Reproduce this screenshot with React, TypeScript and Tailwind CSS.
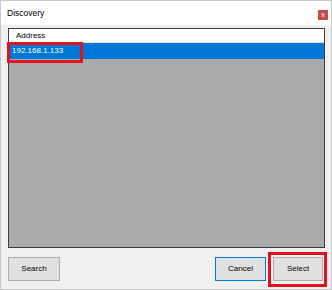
export default function App() {
  return (
    <div
      className="relative flex h-[290px] w-[332px] flex-col border border-[#c9c9c9] bg-[#f0f0f0] text-[8px] text-black"
      style={{ fontFamily: '"Liberation Sans", Arial, sans-serif' }}
    >
      <div className="flex h-[24px] items-center justify-between bg-white pl-[6px] pr-[3px]">
        <span className="text-[8.5px]">Discovery</span>
        <div className="mt-[3px] flex h-[10px] w-[10px] items-center justify-center bg-[#c84949] text-[7px] leading-none text-white">
          x
        </div>
      </div>

      <div className="flex flex-1 flex-col pl-[7px] pr-[6px] pt-[3px]">
        <div className="relative flex h-[220px] flex-col border border-[#3c3c3c] bg-[#ababab]">
          <div className="flex h-[14px] items-center border-b border-[#e2e2e2] bg-white pl-[7px]">
            Address
          </div>
          <div className="flex h-[16px] items-center bg-[#0078d7] pl-[3px] text-white">
            192.168.1.133
          </div>
          <div className="pointer-events-none absolute left-[-2px] top-[13px] h-[21px] w-[76px] border-[3px] border-[#e0141e]" />
        </div>

        <div className="mt-[9px] flex items-center">
          <button className="flex h-[24px] w-[52px] items-center justify-center border border-[#adadad] bg-[#e1e1e1]">
            Search
          </button>
          <div className="flex-1" />
          <button className="flex h-[24px] w-[51px] items-center justify-center border border-[#0078d7] bg-[#e1e1e1]">
            Cancel
          </button>
          <div className="relative ml-[7px]">
            <button className="flex h-[24px] w-[50px] items-center justify-center border border-[#adadad] bg-[#e1e1e1]">
              Select
            </button>
            <div className="pointer-events-none absolute left-[-5px] top-[-5px] h-[35px] w-[59px] border-[3px] border-[#e0141e]" />
          </div>
          <div className="w-[2px]" />
        </div>
      </div>
    </div>
  )
}
